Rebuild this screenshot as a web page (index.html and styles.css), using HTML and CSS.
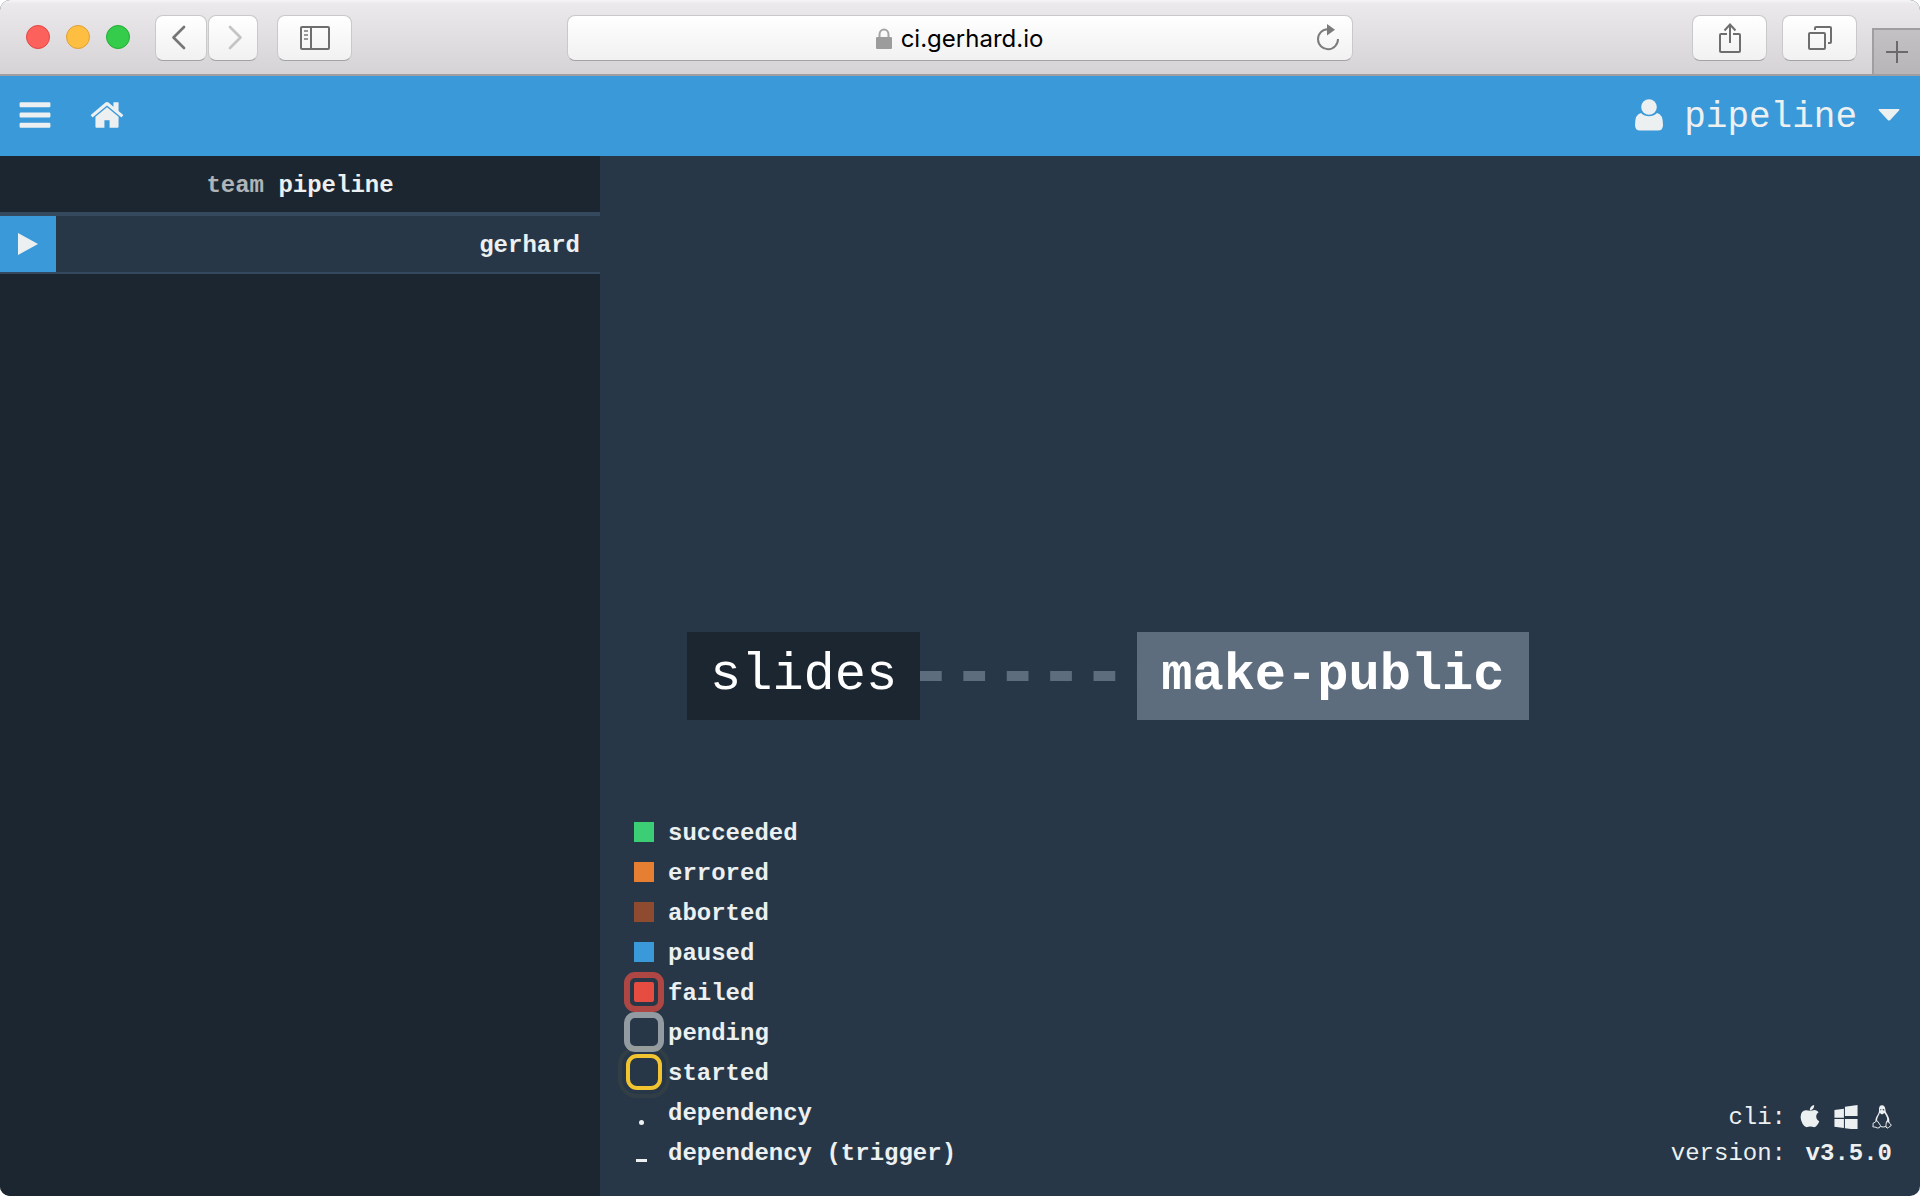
FILE: index.html
```html
<!DOCTYPE html>
<html lang="en">
<head>
<meta charset="utf-8">
<meta name="viewport" content="width=device-width, initial-scale=1">
<title>ci.gerhard.io</title>
<link rel="stylesheet" href="styles.css">
</head>
<body>
<div class="window">
  <header class="chrome">
    <div class="chrome-left">
      <div class="lights">
        <button class="light light-close" aria-label="Close"></button>
        <button class="light light-minimise" aria-label="Minimise"></button>
        <button class="light light-zoom" aria-label="Zoom"></button>
      </div>
      <div class="history">
        <button class="tool tool-back" aria-label="Back">
          <svg width="50" height="44" viewBox="0 0 50 44"><path d="M28 11 17.500 21.500 28 32" fill="none" stroke="#767676" stroke-width="2.700" stroke-linecap="round" stroke-linejoin="round"/></svg>
        </button>
        <button class="tool tool-forward" aria-label="Forward">
          <svg width="48" height="44" viewBox="0 0 48 44"><path d="M21 11 31.500 21.500 21 32" fill="none" stroke="#c4c4c4" stroke-width="2.700" stroke-linecap="round" stroke-linejoin="round"/></svg>
        </button>
      </div>
      <button class="tool tool-wide" aria-label="Sidebar">
        <svg width="30" height="24" viewBox="0 0 30 24" fill="none" stroke="#6e6e6e" stroke-width="2"><rect x="1" y="1" width="28" height="22" rx="1"/><path d="M11 1V23"/><path d="M4 5H8M4 9H8M4 13H8" stroke="#999"/></svg>
      </button>
    </div>
    <div class="address">
      <svg class="lock" width="18" height="22" viewBox="0 0 18 22"><rect x="1" y="9" width="16" height="12" rx="1" fill="#9c9c9c"/><path d="M4.500 9V6.500a4.500 5 0 0 1 9 0V9" fill="none" stroke="#a4a4a4" stroke-width="2"/></svg>
      <span>ci.gerhard.io</span>
      <button class="reload" aria-label="Reload">
        <svg width="24" height="28" viewBox="0 0 24 28"><path d="M11.500 5.200A10 10 0 1 0 22 15" fill="none" stroke="#7b7b7b" stroke-width="2"/><path d="M11 0 19 5.800 11 11.500Z" fill="#7b7b7b"/></svg>
      </button>
    </div>
    <div class="chrome-right">
      <button class="tool tool-wide" aria-label="Share">
        <svg width="24" height="32" viewBox="0 0 24 32" fill="none" stroke="#6e6e6e" stroke-width="2"><path d="M9 12H3a1 1 0 0 0-1 1v16a1 1 0 0 0 1 1H21a1 1 0 0 0 1-1V13a1 1 0 0 0-1-1H15"/><path d="M12 21V3M6.500 8.500 12 2.500 17.500 8.500"/></svg>
      </button>
      <button class="tool tool-wide" aria-label="Show all tabs">
        <svg width="24" height="26" viewBox="0 0 24 26" fill="none" stroke="#6e6e6e" stroke-width="2"><rect x="1" y="8" width="16" height="16" rx="1"/><path d="M7 5V3a1 1 0 0 1 1-1H22a1 1 0 0 1 1 1V17a1 1 0 0 1-1 1H20"/></svg>
      </button>
      <button class="new-tab" aria-label="New tab">
        <svg width="22" height="22" viewBox="0 0 22 22"><path d="M11 0V22M0 11H22" stroke="#6a696b" stroke-width="2"/></svg>
      </button>
    </div>
  </header>

  <nav class="topbar">
    <div class="topbar-group">
      <button class="icon-button" aria-label="Menu">
        <svg width="36" height="36" viewBox="0 0 1792 1792"><path d="M1664 1344v128q0 26-19 45t-45 19h-1408q-26 0-45-19t-19-45v-128q0-26 19-45t45-19h1408q26 0 45 19t19 45zm0-512v128q0 26-19 45t-45 19h-1408q-26 0-45-19t-19-45v-128q0-26 19-45t45-19h1408q26 0 45 19t19 45zm0-512v128q0 26-19 45t-45 19h-1408q-26 0-45-19t-19-45v-128q0-26 19-45t45-19h1408q26 0 45 19t19 45z"/></svg>
      </button>
      <a class="icon-button" href="#" aria-label="Home">
        <svg width="36" height="36" viewBox="0 0 1792 1792"><path d="M1472 992v480q0 26-19 45t-45 19h-384v-384h-256v384h-384q-26 0-45-19t-19-45v-480q0-1 .5-3t.5-3l575-474 575 474q1 2 1 6zm223-69l-62 74q-8 9-21 11h-3q-13 0-21-7l-692-577-692 577q-12 8-24 7-13-2-21-11l-62-74q-8-10-7-23.500t11-21.500l719-599q32-26 76-26t76 26l244 204v-195q0-14 9-23t23-9h192q14 0 23 9t9 23v408l219 182q10 8 11 21.500t-7 23.500z"/></svg>
      </a>
    </div>
    <button class="user">
      <svg width="28" height="32" viewBox="0 0 28 32"><circle cx="14" cy="8" r="7.800"/><path d="M6 14Q9.500 17.300 14 17.300T22 14Q28 15 28 26Q28 31.500 23 31.500H5Q0 31.500 0 26Q0 15 6 14Z"/></svg>
      <span class="user-name">pipeline</span>
      <svg class="caret" width="22" height="12" viewBox="0 0 22 12"><path d="M1 0H21Q22 .5 21 1.500L12 11.200Q11 12 10 11.200L1 1.500Q0 .5 1 0Z"/></svg>
    </button>
  </nav>

  <div class="body">
    <aside class="sidebar">
      <h2 class="team"><span class="team-label">team</span> pipeline</h2>
      <ul class="pipelines">
        <li class="pipeline">
          <button class="play" aria-label="Unpause gerhard"><svg width="20" height="22" viewBox="0 0 20 22"><path d="M0 0 20 11 0 22Z"/></svg></button>
          <a class="pipeline-name" href="#">gerhard</a>
        </li>
      </ul>
    </aside>

    <main class="canvas">
      <div class="graph">
        <a class="node node-resource" href="#">slides</a>
        <div class="edge"></div>
        <a class="node node-job" href="#">make-public</a>
      </div>
      <ul class="legend">
        <li><span class="swatch succeeded"></span>succeeded</li>
        <li><span class="swatch errored"></span>errored</li>
        <li><span class="swatch aborted"></span>aborted</li>
        <li><span class="swatch paused"></span>paused</li>
        <li><span class="swatch failed"></span>failed</li>
        <li><span class="swatch pending"></span>pending</li>
        <li><span class="swatch started"></span>started</li>
        <li><span class="swatch dot"></span>dependency</li>
        <li><span class="swatch dash"></span>dependency (trigger)</li>
      </ul>
      <dl class="info">
        <dt>cli:</dt>
        <dd class="downloads">
          <a href="#" aria-label="macOS"><svg width="20" height="24" viewBox="149 0 1493 1792"><path d="M1585 1215q-39 125-123 250-129 196-257 196-49 0-140-32-86-32-151-32-61 0-142 33-81 34-132 34-152 0-301-259-147-261-147-503 0-228 113-374 113-144 284-144 72 0 177 30 104 30 138 30 45 0 143-34 102-34 173-34 119 0 213 65 52 36 104 100-79 67-114 118-65 94-65 207 0 124 69 223t158 126zm-376-1173q0 61-29 136-30 75-93 138-54 54-108 72-37 11-104 17 3-149 78-257 74-107 250-148 1 3 2.500 11t2.500 11q0 4 .5 10t.5 10z"/></svg></a>
          <a href="#" aria-label="Windows"><svg width="24" height="24" viewBox="32 0 1728 1728"><path d="M746 1006v651l-682-94v-557h682zm0-743v659h-682v-565zm982 743v786l-907-125v-661h907zm0-1006v794h-907v-669z"/></svg></a>
          <a href="#" aria-label="Linux"><svg width="20" height="24" viewBox="0 0 20 24"><path fill-rule="evenodd" d="M7 4C7 1.500 8 .2 10 .2S13.300 1.800 13.400 4.500C13.500 7.500 15 8.500 16.300 11.500C17.600 14.500 17.500 16 17 17.500L14.800 16C16 13.500 14.500 11 12.500 8L10 9.500 7.800 8C7 10.500 5 12.500 5 15.500L3.500 17C3.200 14.500 3.800 12.500 5.200 10.500C7 8 7 6.500 7 4ZM8.300 4.200V5.500L9.300 5 9.300 4ZM10.800 4 10.700 5.200 12.200 5.500V4.200Z"/><path fill="none" stroke="#ecf0f1" stroke-width="1" d="M5 15.500 8.500 20.500Q8 23.500 5.500 23Q3 21.800 .8 21.800Q1.500 19.500 .9 18.500L3.500 16.800ZM14.500 16.500Q13.800 20 14 22Q15 24 16.500 22.500L19.400 20.300Q17.500 18.500 17.200 17.200ZM8.500 21.500Q11 22.500 14 21.500"/></svg></a>
        </dd>
        <dt>version:</dt>
        <dd class="version">v3.5.0</dd>
      </dl>
    </main>
  </div>
</div>
</body>
</html>
```
FILE: styles.css
```css
* { box-sizing: border-box; }

body {
  margin: 0;
  background: #fff;
  color: #ecf0f1;
  font: 24px/40px "Liberation Mono", "Courier New", monospace;
}

button {
  padding: 0;
  border: 0;
  background: none;
  color: inherit;
  font: inherit;
}

a { color: inherit; text-decoration: none; }
svg { display: block; flex: none; }
ul, dl, dd, h2 { margin: 0; padding: 0; list-style: none; }

.window {
  display: flex;
  flex-direction: column;
  min-height: 100vh;
  border-radius: 10px;
  overflow: hidden;
  background: #273747;
}

/* Browser toolbar */
.chrome {
  display: grid;
  grid-template-columns: 1fr 41% 1fr;
  align-items: start;
  height: 76px;
  padding-top: 15px;
  border-bottom: 2px solid #a09ea1;
  background: linear-gradient(#f6f4f6, #ebe9ec 4px, #d5d3d6);
}

.chrome-left, .chrome-right, .lights, .history { display: flex; }
.chrome-left { padding-left: 26px; }
.chrome-right { justify-content: flex-end; gap: 15px; }

.lights { gap: 16px; margin: 10px 25px 0 0; }
.light { width: 24px; height: 24px; border: 1px solid; border-radius: 50%; }
.light-close { background: #fd615c; border-color: #e24542; }
.light-minimise { background: #fdbe41; border-color: #dfa037; }
.light-zoom { background: #35cb4b; border-color: #22ac34; }

.history { gap: 1px; margin-right: 19px; }

.tool, .address {
  height: 46px;
  border: 1px solid #c9c8ca;
  border-bottom-color: #a3a2a4;
  border-radius: 8px;
  background: linear-gradient(#fff, #f1f1f1);
}
.tool { display: flex; align-items: center; justify-content: center; }
.tool-back { width: 52px; }
.tool-forward { width: 50px; }
.tool-wide { width: 75px; }

.address {
  display: flex;
  align-items: center;
  justify-content: center;
  gap: 8px;
  position: relative;
  margin: 0 1px;
  padding: 2px 2px 0 0;
  color: #000;
  font: 24px/42px Inter, "Liberation Sans", sans-serif;
}
.reload { position: absolute; right: 12px; top: 8px; }

.new-tab {
  display: flex;
  align-items: center;
  justify-content: center;
  width: 48px;
  height: 46px;
  margin-top: 13px;
  border: 2px solid #a09ea1;
  border-width: 2px 0 0 2px;
  background: linear-gradient(#c3c1c4, #b7b5b8);
}

/* Top bar */
.topbar {
  display: flex;
  align-items: center;
  justify-content: space-between;
  height: 80px;
  padding: 0 20px 2px 17px;
  background: #3a99d9;
  fill: #ecf0f1;
}
.topbar-group { display: flex; gap: 36px; }
.user { display: flex; align-items: center; gap: 21px; font-size: 36px; }
.user-name { padding-top: 6px; }

/* Team sidebar */
.body { display: flex; flex: 1; }
.sidebar { width: 600px; max-width: 50%; background: #1c2630; }
.team {
  padding-top: 4px;
  border-bottom: 4px solid #34495e;
  font: inherit;
  font-weight: bold;
  line-height: 52px;
  text-align: center;
}
.team-label { opacity: .7; }
.pipeline {
  display: flex;
  align-items: center;
  justify-content: space-between;
  height: 58px;
  border-bottom: 2px solid #34495e;
  background: #273747;
}
.play {
  display: flex;
  align-items: center;
  justify-content: center;
  width: 56px;
  height: 56px;
  background: #3a99d9;
  fill: #ecf0f1;
}
.pipeline-name { padding: 4px 20px 0 0; font-weight: bold; }

/* Pipeline view */
.canvas {
  flex: 1;
  display: grid;
  grid-template-columns: 1fr auto;
  grid-template-rows: 1fr auto;
  align-items: end;
  padding: 0 28px 24px 34px;
}
.graph {
  grid-column: 1 / -1;
  display: flex;
  align-items: center;
  margin: 0 0 92px 53px;
}
.node {
  height: 88px;
  padding: 0 23px;
  color: #fff;
  font-size: 52px;
  line-height: 88px;
}
.node-resource { background: #1c2630; }
.node-job { padding: 0 24px; background: #5d6d7e; font-weight: bold; }
.edge {
  width: 217px;
  height: 10px;
  background: linear-gradient(90deg, #5d6d7e 50%, transparent 50%) 0 0 / 20% 100%;
}

.legend { font-weight: bold; line-height: 44px; }
.legend li { display: flex; gap: 14px; height: 40px; }
.swatch { position: relative; width: 20px; height: 20px; margin-top: 10px; }
.succeeded { background: #3bce75; }
.errored { background: #e67f31; }
.aborted { background: #8f4b2f; }
.paused { background: #3a99d9; }
.failed { background: #e74c41; border-radius: 2px; }
.failed::before, .pending::before, .started::before {
  content: "";
  position: absolute;
  inset: -10px;
  border: 6px solid #ae4743;
  border-radius: 11px;
}
.pending::before { border-color: #939ba2; }
.started::before {
  inset: -8px;
  border: 4px solid #f2c42f;
  outline: 4px solid rgba(242, 196, 47, .05);
  outline-offset: 4px;
}
.dot::before, .dash::before {
  content: "";
  position: absolute;
  left: 5px;
  top: 18px;
  width: 5px;
  height: 5px;
  border-radius: 50%;
  background: #ecf0f1;
}
.dash::before { left: 2px; top: 17px; width: 11px; height: 3px; border-radius: 0; }

.info {
  display: grid;
  grid-template-columns: auto auto;
  column-gap: 14px;
  line-height: 36px;
  text-align: right;
}
.downloads { display: flex; align-items: center; gap: 14px; padding-bottom: 2px; fill: #ecf0f1; }
.version { font-weight: bold; }
```
